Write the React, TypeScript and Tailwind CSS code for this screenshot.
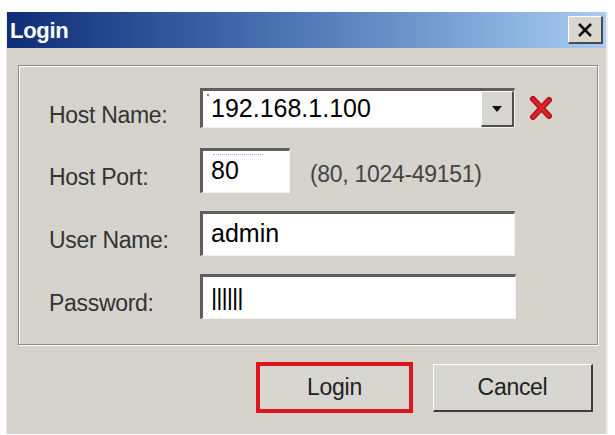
const sunken =
  'bg-white border-t-[3px] border-l-[3px] border-t-[#5e5e5e] border-l-[#5e5e5e] border-b border-r border-b-[#f2f2f2] border-r-[#f2f2f2]'

const Label = ({ text }: { text: string }) => (
  <div className="w-[181px] pl-[30px] pt-[14px] text-[23px] text-[#333] tracking-[-0.3px]">{text}</div>
)

const RedX = () => (
  <svg width="26" height="26" viewBox="0 0 26 26" className="ml-[13px]">
    <path d="M5 4 L21 21 M21 5 L5 22" stroke="#b8121a" strokeWidth="6" strokeLinecap="round" />
    <path d="M5 4 L21 21 M21 5 L5 22" stroke="#d4262c" strokeWidth="3" strokeLinecap="round" />
  </svg>
)

export default function App() {
  return (
    <div className="w-[615px] h-[435px] bg-white pt-[12px] pl-[6px] font-['Liberation_Sans',Arial,sans-serif]">
      <div className="w-[602px] h-[422px] bg-[#d5d3cc] border-l border-r-2 border-[#ececec] flex flex-col">
        <div className="h-[36px] flex items-center justify-between pl-[3px] pr-[3px] bg-gradient-to-r from-[#0f2d78] via-[#5179b6] to-[#a9cdf2]">
          <span className="text-white font-bold text-[22px] tracking-[-0.3px]">Login</span>
          <div className="w-[35px] h-[28px] bg-[#d9d7d0] border-t border-l border-t-white border-l-white border-b-2 border-r-2 border-b-[#4a4a4a] border-r-[#4a4a4a] flex items-center justify-center">
            <svg width="16" height="14" viewBox="0 0 16 14">
              <path d="M2 1 L14 13 M14 1 L2 13" stroke="#111" strokeWidth="2.6" />
            </svg>
          </div>
        </div>

        <div className="flex-1 pl-[11px] pt-[17px]">
          <div className="w-[580px] h-[280px] border border-[#8c8c88] shadow-[inset_1px_1px_0_#fff,1px_1px_0_#fff] pt-[22px] flex flex-col gap-[21px]">
            <div className="flex items-center h-[40px]">
              <Label text="Host Name:" />
              <div className={`${sunken} w-[315px] h-[40px] flex items-center relative`}>
                <span className="absolute left-[4px] top-[3px] w-[2px] h-[2px] bg-[#888]" />
                <span className="flex-1 pl-[8px] text-[25px] text-black">192.168.1.100</span>
                <div className="w-[33px] h-full bg-[#d8d6d0] border-t border-l border-t-white border-l-white border-b-2 border-r-2 border-b-[#505050] border-r-[#505050] flex items-center justify-center">
                  <svg width="12" height="8" viewBox="0 0 12 8">
                    <path d="M1 1 L11 1 L6 7 Z" fill="#111" />
                  </svg>
                </div>
              </div>
              <RedX />
            </div>

            <div className="flex items-center h-[42px]">
              <Label text="Host Port:" />
              <div className={`${sunken} w-[90px] h-[45px] flex items-center relative`}>
                <span className="absolute left-[10px] top-[3px] w-[50px] border-t border-dotted border-[#b0b0b0]" />
                <span className="pl-[8px] text-[25px] text-black">80</span>
              </div>
              <span className="ml-[20px] pt-[8px] text-[23px] text-[#444] tracking-[-0.3px]">(80, 1024-49151)</span>
            </div>

            <div className="flex items-center h-[42px]">
              <Label text="User Name:" />
              <div className={`${sunken} w-[315px] h-[45px] flex items-center`}>
                <span className="pl-[8px] text-[25px] text-black">admin</span>
              </div>
            </div>

            <div className="flex items-center h-[42px]">
              <Label text="Password:" />
              <div className={`${sunken} w-[316px] h-[45px] flex items-center`}>
                <span className="pl-[8px] text-[24px] text-black font-light tracking-[-1px]">||||||</span>
              </div>
            </div>
          </div>

          <div className="w-[575px] flex justify-end items-center gap-[20px] mt-[17px]">
            <div className="w-[157px] h-[51px] border-[4px] border-[#e0141c] bg-[#d8d6d0] flex items-center justify-center">
              <span className="text-[23px] text-[#222] tracking-[-0.3px]">Login</span>
            </div>
            <div className="w-[160px] h-[48px] bg-[#d8d6d0] border-t border-l border-t-white border-l-white border-b-2 border-r-2 border-b-[#3c3c3c] border-r-[#3c3c3c] flex items-center justify-center">
              <span className="text-[23px] text-[#222] tracking-[-0.3px]">Cancel</span>
            </div>
          </div>
        </div>
      </div>
    </div>
  )
}
